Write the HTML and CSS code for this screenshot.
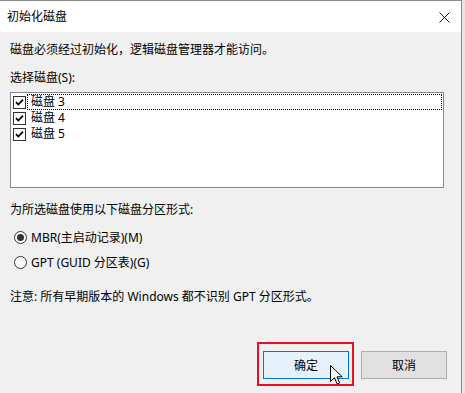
FILE: index.html
```html
<!DOCTYPE html>
<html lang="zh-CN">
<head>
    <meta charset="UTF-8">
    <meta name="viewport" content="width=device-width, initial-scale=1.0">
    <title>初始化磁盘</title>
    <link rel="stylesheet" href="styles.css">
</head>
<body>
    <div class="window">
        <div class="titlebar">
            <span class="title">初始化磁盘</span>
            <svg class="close" width="11" height="11" viewBox="0 0 11 11">
                <path d="M0.5 0.5 L10.5 10.5 M10.5 0.5 L0.5 10.5" stroke="#111" stroke-width="1" fill="none"/>
            </svg>
        </div>

        <div class="content">
            <p class="intro">磁盘必须经过初始化，逻辑磁盘管理器才能访问。</p>
            <p class="label">选择磁盘(S):</p>

            <ul class="disk-list">
                <li class="disk-item">
                    <span class="check"><svg width="9" height="9" viewBox="0 0 9 9"><path d="M1 4.2 L3.3 6.6 L8 1.6" stroke="#000" stroke-width="1.7" fill="none"/></svg></span>
                    <span class="disk-name focused">磁盘 3</span>
                </li>
                <li class="disk-item">
                    <span class="check"><svg width="9" height="9" viewBox="0 0 9 9"><path d="M1 4.2 L3.3 6.6 L8 1.6" stroke="#000" stroke-width="1.7" fill="none"/></svg></span>
                    <span class="disk-name">磁盘 4</span>
                </li>
                <li class="disk-item">
                    <span class="check"><svg width="9" height="9" viewBox="0 0 9 9"><path d="M1 4.2 L3.3 6.6 L8 1.6" stroke="#000" stroke-width="1.7" fill="none"/></svg></span>
                    <span class="disk-name">磁盘 5</span>
                </li>
            </ul>

            <p class="label style-label">为所选磁盘使用以下磁盘分区形式:</p>

            <div class="radio-row first">
                <span class="radio checked"></span>
                <span>MBR(主启动记录)(M)</span>
            </div>
            <div class="radio-row second">
                <span class="radio"></span>
                <span>GPT (GUID 分区表)(G)</span>
            </div>

            <p class="note">注意: 所有早期版本的 Windows 都不识别 GPT 分区形式。</p>

            <div class="buttons">
                <span class="highlight"><button class="btn btn-default">确定</button></span>
                <button class="btn btn-cancel">取消</button>
            </div>
        </div>

        <!-- 鼠标指针 -->
        <svg class="cursor" width="13" height="21" viewBox="0 0 13 21">
            <path d="M0.5 0.5 L0.5 16.5 L4.5 12.7 L7.2 19 L9.6 18 L7 11.8 L12.2 11.8 Z" fill="#fff" stroke="#000" stroke-width="1" stroke-linejoin="miter"/>
        </svg>
    </div>
</body>
</html>
```

FILE: styles.css
```css
body {
    margin: 0;
    background-color: #e6e6e6;
    font-family: "Noto Sans", "Noto Sans CJK SC", sans-serif;
    font-size: 12px;
    color: #000;
}
.window {
    position: relative;
    width: 461px;
    height: 392px;
    background-color: #f0f0f0;
    border-top: 1px solid #8a8a8a;
    border-right: 1px solid #8a8a8a;
}
.titlebar {
    display: flex;
    justify-content: space-between;
    align-items: center;
    height: 31px;
    padding: 0 7px 0 7px;
    background-color: white;
}
.title {
    line-height: 31px;
}
.close {
    margin-right: 4px;
    margin-top: 1px;
}
.content {
    padding: 0 14px 0 10px;
}
p {
    margin: 0;
    line-height: 16px;
}
.intro {
    padding-top: 10px;
}
.label {
    margin-top: 12px;
}
.disk-list {
    list-style: none;
    margin: 6px 0 0 0;
    padding: 1px 0 0 0;
    width: 434px;
    height: 96px;
    box-sizing: border-box;
    background-color: white;
    border: 1px solid #828790;
}
.disk-item {
    display: flex;
    align-items: center;
    height: 16px;
}
.check {
    display: flex;
    align-items: center;
    justify-content: center;
    width: 11px;
    height: 11px;
    margin: 0 1px 0 2px;
    border: 1px solid #333;
    background-color: white;
}
.disk-name {
    flex: 1;
    height: 14px;
    line-height: 14px;
    padding-left: 3px;
    margin-right: 1px;
    border: 1px solid transparent;
}
.disk-name.focused {
    border: 1px dotted #000;
}
.style-label {
    margin-top: 14px;
}
.radio-row {
    display: flex;
    align-items: center;
    height: 16px;
    padding-left: 4px;
}
.radio-row.first {
    margin-top: 11px;
}
.radio-row.second {
    margin-top: 9px;
}
.radio {
    width: 11px;
    height: 11px;
    margin-right: 4px;
    border: 1px solid #333;
    border-radius: 50%;
    background-color: white;
    position: relative;
}
.radio.checked::after {
    content: "";
    position: absolute;
    left: 2px;
    top: 2px;
    width: 7px;
    height: 7px;
    border-radius: 50%;
    background-color: #333;
}
.note {
    margin-top: 19px;
}
.buttons {
    display: flex;
    justify-content: flex-end;
    align-items: flex-start;
    gap: 7px;
    margin-top: 37px;
}
.highlight {
    display: block;
    padding: 7px 3px 5px 4px;
    border: 2px solid #e81123;
}
.btn {
    display: block;
    width: 86px;
    height: 28px;
    font-family: inherit;
    font-size: 12px;
    color: #000;
    border-radius: 0;
    cursor: default;
}
.btn-default {
    background-color: #e5f1fb;
    border: 1px solid #0078d7;
}
.btn-cancel {
    margin-top: 9px;
    background-color: #e1e1e1;
    border: 1px solid #adadad;
}
.cursor {
    position: absolute;
    left: 330px;
    top: 364px;
}
```
